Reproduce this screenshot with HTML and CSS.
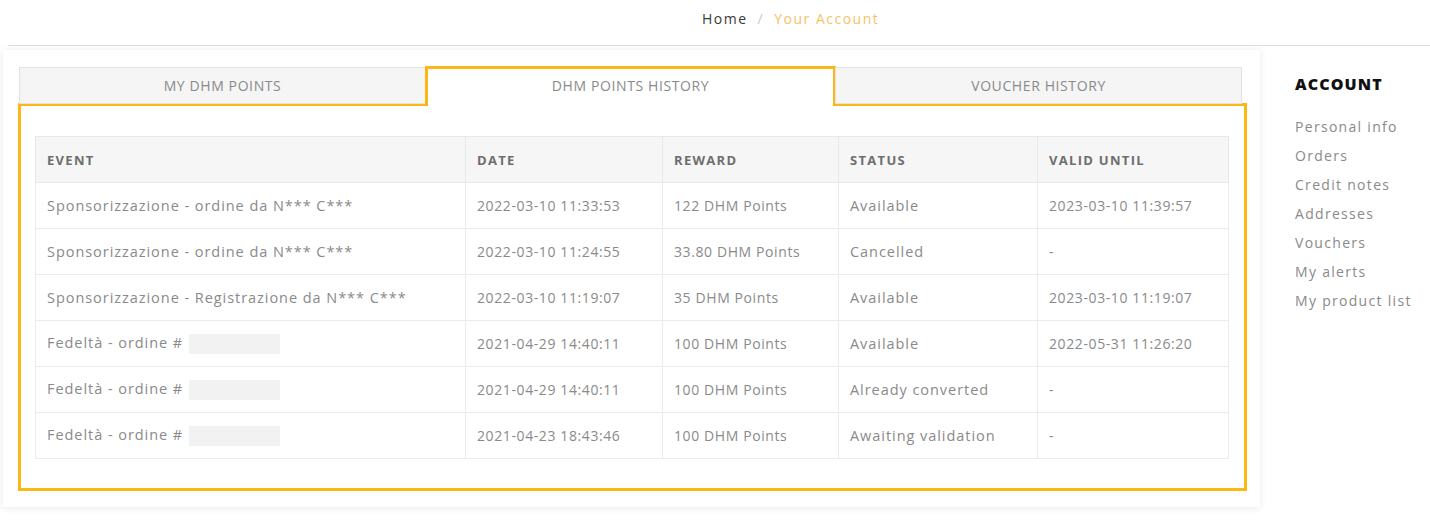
FILE: index.html
```html
<!DOCTYPE html>
<html lang="it">
<head>
<meta charset="utf-8">
<title>Your Account</title>
<link rel="stylesheet" href="styles.css">
</head>
<body>
<nav class="crumbs">
  <a class="crumb-home" href="#">Home</a>
  <span class="crumb-sep">/</span>
  <span class="crumb-current">Your Account</span>
</nav>
<main class="main">
  <section class="card">
    <div class="tabs">
      <div class="tab">MY DHM POINTS</div>
      <div class="tab tab-active">DHM POINTS HISTORY</div>
      <div class="tab">VOUCHER HISTORY</div>
    </div>
    <div class="panel">
      <table class="history">
        <colgroup>
          <col class="c-event"><col class="c-date"><col class="c-reward"><col class="c-status"><col class="c-valid">
        </colgroup>
        <thead>
          <tr><th>EVENT</th><th>DATE</th><th>REWARD</th><th>STATUS</th><th>VALID UNTIL</th></tr>
        </thead>
        <tbody>
          <tr><td class="t">Sponsorizzazione - ordine da N*** C***</td><td>2022-03-10 11:33:53</td><td>122 DHM Points</td><td class="t">Available</td><td>2023-03-10 11:39:57</td></tr>
          <tr><td class="t">Sponsorizzazione - ordine da N*** C***</td><td>2022-03-10 11:24:55</td><td>33.80 DHM Points</td><td class="t">Cancelled</td><td>-</td></tr>
          <tr><td class="t">Sponsorizzazione - Registrazione da N*** C***</td><td>2022-03-10 11:19:07</td><td>35 DHM Points</td><td class="t">Available</td><td>2023-03-10 11:19:07</td></tr>
          <tr><td class="t">Fedeltà - ordine #<span class="mask"></span></td><td>2021-04-29 14:40:11</td><td>100 DHM Points</td><td class="t">Available</td><td>2022-05-31 11:26:20</td></tr>
          <tr><td class="t">Fedeltà - ordine #<span class="mask"></span></td><td>2021-04-29 14:40:11</td><td>100 DHM Points</td><td class="t">Already converted</td><td>-</td></tr>
          <tr><td class="t">Fedeltà - ordine #<span class="mask"></span></td><td>2021-04-23 18:43:46</td><td>100 DHM Points</td><td class="t">Awaiting validation</td><td>-</td></tr>
        </tbody>
      </table>
    </div>
  </section>
  <aside class="side">
    <h2 class="side-title">ACCOUNT</h2>
    <ul class="side-list">
      <li><a href="#">Personal info</a></li>
      <li><a href="#">Orders</a></li>
      <li><a href="#">Credit notes</a></li>
      <li><a href="#">Addresses</a></li>
      <li><a href="#">Vouchers</a></li>
      <li><a href="#">My alerts</a></li>
      <li><a href="#">My product list</a></li>
    </ul>
  </aside>
</main>
</body>
</html>
```

FILE: styles.css
```css
* { box-sizing: border-box; }
html, body { margin: 0; padding: 0; background: #fff; }
body {
  font-family: "Open Sans", "DejaVu Sans", sans-serif;
  font-size: 14px;
  color: #888;
  width: 1430px;
  height: 525px;
  overflow: hidden;
}
a { text-decoration: none; color: inherit; }

.crumbs {
  margin-left: 8px;
  height: 46px;
  border-bottom: 1px solid #dedede;
  padding: 8px 0 0 694px;
  line-height: 22px;
  font-size: 14px;
  letter-spacing: 1.5px;
  display: flex;
}
.crumb-home { color: #3a3a3a; }
.crumb-sep { color: #c8c8c8; margin: 0 10px 0 10px; }
.crumb-current { color: #f5c266; }

.main {
  display: flex;
  margin-top: 4px;
}

.card {
  margin-left: 3px;
  width: 1257px;
  height: 457px;
  padding: 17px 13px 16px 15px;
  background: #fff;
  box-shadow: 0 1px 8px rgba(0,0,0,0.09);
}

.tabs {
  display: flex;
  margin: 0 5px 0 1px;
  height: 37px;
  position: relative;
  z-index: 1;
}
.tab {
  flex: 1;
  height: 37px;
  background: #f5f5f5;
  border: 1px solid #e2e2e2;
  color: #8a8a8a;
  font-size: 14px;
  letter-spacing: 0.6px;
  display: flex;
  align-items: center;
  justify-content: center;
}
.tab-active {
  background: #fff;
  border: 3px solid #fbb812;
  border-bottom: none;
  height: 40px;
  margin-top: -1px;
  padding-bottom: 4px;
  margin-left: -1px;
  margin-right: -1px;
}

.panel {
  margin-top: -1px;
  border: 3px solid #fbb812;
  padding: 30px 16px 30px 14px;
  height: 388px;
}

.history {
  width: 1193px;
  border-collapse: collapse;
  table-layout: fixed;
  border: 1px solid #ebebeb;
}
.c-event { width: 430px; }
.c-date { width: 197px; }
.c-reward { width: 176px; }
.c-status { width: 199px; }
.c-valid { width: 191px; }

.history th {
  background: #f6f6f6;
  height: 46px;
  text-align: left;
  padding: 0 12px 0 11px;
  font-size: 13px;
  font-weight: 700;
  letter-spacing: 1.3px;
  color: #6e6e6e;
  border: 1px solid #e8e8e8;
}
.history td {
  height: 46px;
  padding: 0 12px 0 11px;
  border: 1px solid #ebebeb;
  color: #8a8a8a;
  letter-spacing: 0.6px;
  white-space: nowrap;
}
.history td.t {
  font-size: 14.5px;
  letter-spacing: 0.95px;
}
.mask {
  display: inline-block;
  width: 91px;
  height: 20px;
  background: #f2f2f2;
  vertical-align: middle;
  margin-left: 6px;
}

.side {
  margin-left: 35px;
  padding-top: 23px;
}
.side-title {
  margin: 0;
  font-size: 16px;
  line-height: 22px;
  font-weight: 800;
  letter-spacing: 1.1px;
  color: #111;
}
.side-list {
  list-style: none;
  margin: 17px 0 0;
  padding: 0;
}
.side-list li {
  line-height: 29px;
  font-size: 14px;
  letter-spacing: 1.3px;
  color: #8a8a8a;
}
```
